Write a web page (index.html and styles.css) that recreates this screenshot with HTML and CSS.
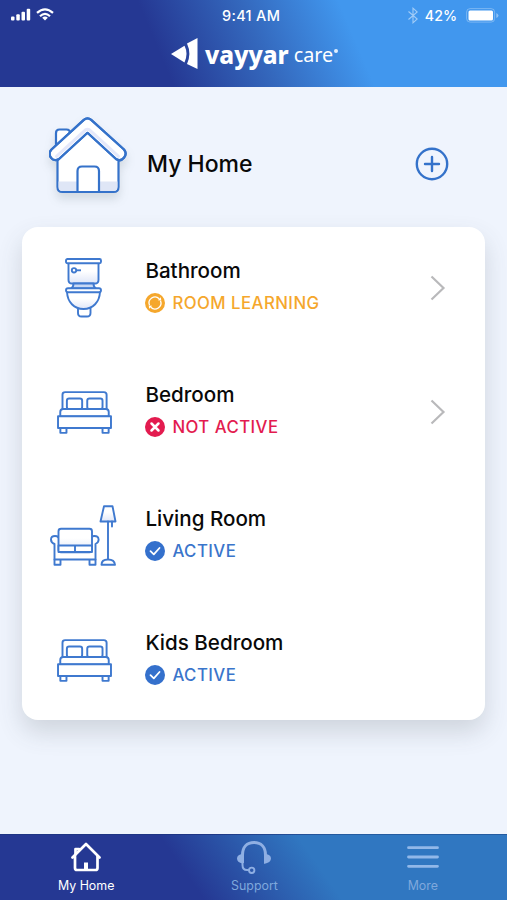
FILE: index.html
```html
<!DOCTYPE html>
<html lang="en">
<head>
  <meta charset="UTF-8" />
  <meta name="viewport" content="width=device-width, initial-scale=1" />
  <title>Vayyar Care - My Home</title>
  <link rel="stylesheet" href="styles.css">
</head>
<body>

<svg class="defs" width="0" height="0">
  <defs>
    <linearGradient id="fade" x1="0" y1="0" x2="0" y2="1">
      <stop offset="0.4" stop-color="#fff" />
      <stop offset="1" stop-color="#dfe6f8" />
    </linearGradient>
    <symbol id="bed" viewBox="0 0 54 42">
      <g fill="#fff" stroke="#3f79cf" stroke-width="1.9" stroke-linejoin="round">
        <path d="M5.4 17.5V3.5Q5.4 1 8 1H46Q48.7 1 48.7 3.5V17.5" />
        <rect x="9.7" y="7.3" width="15" height="10.5" rx="2.2" />
        <rect x="29.7" y="7.3" width="15" height="10.5" rx="2.2" />
        <path d="M3.2 25V20.5Q3.2 17.5 6.2 17.5H47.8Q50.8 17.5 50.8 20.5V25Z" />
        <rect x="3.3" y="35.5" width="6" height="5.5" />
        <rect x="44.7" y="35.5" width="6" height="5.5" />
        <rect x="1" y="24.7" width="52" height="11.5" />
      </g>
    </symbol>
    <symbol id="check" viewBox="0 0 20 20">
      <circle cx="10" cy="10" r="10" fill="#3470cc" />
      <path d="M5.5 10.2L8.8 13.3L14.5 7" fill="none" stroke="#fff" stroke-width="1.8" stroke-linecap="round" stroke-linejoin="round" />
    </symbol>
  </defs>
</svg>

<div class="app">
  <header class="header">
    <div class="status-bar">
      <div class="status-left">
        <svg width="20" height="13" viewBox="0 0 20 13" fill="#fff">
          <rect x="0" y="8.5" width="3.5" height="4" rx="1" />
          <rect x="5.3" y="6.3" width="3.5" height="6.2" rx="1" />
          <rect x="10.5" y="3.7" width="3.5" height="8.8" rx="1" />
          <rect x="15.7" y="0.7" width="3.5" height="11.8" rx="1" />
        </svg>
        <svg width="18" height="13" viewBox="0 0 18 13" fill="none" stroke="#fff" stroke-width="2.2">
          <path d="M1 4.9Q9 -2.3 17 4.9" />
          <path d="M4 8.2Q9 3.7 14 8.2" />
          <path d="M9 12.5L6.2 9.7Q9 7.5 11.8 9.7Z" fill="#fff" stroke="none" />
        </svg>
      </div>
      <span class="time">9:41 AM</span>
      <div class="status-right">
        <svg class="bluetooth" width="10" height="17" viewBox="0 0 10 17">
          <path d="M0.5 4.5L9.2 12L5 15.8V1.2L9.2 5L0.5 12.5" fill="none" stroke="#fff" stroke-width="1.1" />
        </svg>
        <span class="percent">42%</span>
        <svg class="battery" width="33" height="15" viewBox="0 0 33 15">
          <rect x="0.6" y="0.6" width="28" height="13.5" rx="3.5" fill="none" stroke="#fff" stroke-opacity="0.3" />
          <rect x="2.5" y="2.4" width="24.5" height="10" rx="1.5" fill="#fff" />
          <path d="M30.3 5V10Q32.5 9 32.5 7.5T30.3 5Z" fill="#fff" fill-opacity="0.4" />
        </svg>
      </div>
    </div>
    <div class="logo">
      <svg width="27" height="32" viewBox="0 0 27 32" fill="#fff">
        <path d="M0 16L13.5 7.7Q17.5 15.5 13.5 24.5Z" />
        <path d="M16 5.5L26.5 0V31L16 26Q20.7 15.5 16 5.5Z" />
      </svg>
      <span class="brand">vayyar</span>
      <span class="product">care</span>
      <span class="mark"></span>
    </div>
  </header>

  <main class="content">
    <div class="home">
      <svg class="home-icon" width="78" height="78" viewBox="0 0 78 78">
        <g stroke="#3572ca" stroke-width="2.2" stroke-linejoin="round" stroke-linecap="round">
          <path d="M7 32V16Q7 12.500 10.500 12.500H17.500Q21 12.500 21 16V25" fill="#fff" />
          <path d="M8.5 40L38.5 14L69.5 40V70Q69.5 75 64.5 75H13.5Q8.5 75 8.5 70Z" fill="#fff" />
          <path d="M9.6 64.5H68.4V70Q68.4 73.9 64.5 73.9H13.5Q9.6 73.9 9.6 70Z" fill="#dfe6f6" stroke="none" />
          <path d="M28.5 75V54Q28.5 49.5 33 49.5H45.5Q50 49.5 50 54V75Z" fill="#fff" />
          <path d="M34.8 2.9Q38.5 -0.3 42.2 2.9L75 32.5C79.5 38 73 46 67 42L38.5 15.8L10 42C4 46 -2.5 38 2.5 32.5Z" fill="#fff" />
          <path d="M7.500 39.300L36.500 12.800Q38.500 11.500 40.500 12.800L69.500 39.300" fill="none" stroke="#e5e8fa" stroke-width="3" />
          <path d="M34.8 2.9Q38.5 -0.3 42.2 2.9L75 32.5C79.5 38 73 46 67 42L38.5 15.8L10 42C4 46 -2.5 38 2.5 32.5Z" fill="none" />
        </g>
      </svg>
      <h1>My Home</h1>
      <svg class="add" width="34" height="34" viewBox="0 0 34 34" fill="none" stroke="#3472ca" stroke-width="2.4" stroke-linecap="round">
        <circle cx="17" cy="17" r="15.2" />
        <path d="M10 17H24M17 10V24" />
      </svg>
    </div>

    <div class="rooms">
      <div class="room">
        <div class="room-icon">
          <svg width="38" height="60" viewBox="0 0 38 60">
            <g fill="url(#fade)" stroke="#3f79cf" stroke-width="1.9" stroke-linejoin="round">
              <path d="M3.5 5V22Q3.5 25.5 7 25.5H30Q33.5 25.5 33.5 22V5Z" />
              <rect x="1" y="1" width="35" height="4.3" rx="1.5" fill="#fff" />
              <path d="M8.5 25.5Q8.5 29 6 30.5H31Q28.5 29 28.5 25.5Z" fill="#c8d8f4" />
              <path d="M13 50V55Q13 58.5 16.5 58.5H22Q25.5 58.5 25.5 55V50Z" fill="#fff" />
              <path d="M2 34C2.5 44 9 51 18.5 51S34.5 44 35 34Z" />
              <rect x="1" y="30.3" width="35" height="4" rx="2" fill="#fff" />
              <circle cx="9" cy="12.3" r="2.2" fill="#fff" />
              <path d="M11.2 12.3H16" />
            </g>
          </svg>
        </div>
        <div class="room-info">
          <h2>Bathroom</h2>
          <div class="status learning">
            <svg width="20" height="20" viewBox="0 0 20 20">
              <circle cx="10" cy="10" r="10" fill="#f5a72c" />
              <g fill="none" stroke="#fff" stroke-width="1.3">
                <path d="M4.5 12.3A6 6 0 0 1 14.2 5.7" />
                <path d="M15.5 7.7A6 6 0 0 1 5.8 14.3" />
              </g>
              <path d="M12.8 7.3L16.3 7.6L15.7 4.2ZM7.2 12.7L3.7 12.4L4.3 15.8Z" fill="#fff" />
            </svg>
            <span>ROOM LEARNING</span>
          </div>
        </div>
        <svg class="chevron" width="16" height="26" viewBox="0 0 16 26"><path d="M1.5 1.5L13.5 13L1.5 24.5" /></svg>
      </div>

      <div class="room">
        <div class="room-icon"><svg class="bed" width="55" height="43"><use href="#bed" /></svg></div>
        <div class="room-info">
          <h2>Bedroom</h2>
          <div class="status inactive">
            <svg width="20" height="20" viewBox="0 0 20 20">
              <circle cx="10" cy="10" r="10" fill="#e31b4f" />
              <path d="M6.5 6.5L13.5 13.5M13.5 6.5L6.5 13.5" stroke="#fff" stroke-width="2.5" stroke-linecap="round" />
            </svg>
            <span>NOT ACTIVE</span>
          </div>
        </div>
        <svg class="chevron" width="16" height="26" viewBox="0 0 16 26"><path d="M1.5 1.5L13.5 13L1.5 24.5" /></svg>
      </div>

      <div class="room">
        <div class="room-icon">
          <svg width="68" height="62" viewBox="0 0 68 62">
            <g fill="#fff" stroke="#3f79cf" stroke-width="1.9" stroke-linejoin="round" stroke-linecap="round">
              <path d="M54 1.2H62.5L65.5 16.5H50.5Z" fill="url(#fade)" />
              <path d="M58 16.5V54.5M62 16.5V21.5" />
              <path d="M51.5 59.8Q51.5 54.5 58 54.5T65 59.8Z" />
              <path d="M4.5 54.5V59.8H10.5V54.5M39.5 54.5V59.8H45.5V54.5" />
              <path d="M4.5 54.5V39C-0.5 37 0 31 5 31Q9.5 31 9.5 36V47H40V36Q40 31 44.5 31C49.5 31 50 37 45.5 39V54.5Z" />
              <rect x="8.5" y="23.7" width="33.5" height="23.5" rx="2.5" fill="url(#fade)" />
              <path d="M8.5 40.5H42V47H8.5ZM25 40.5V47" />
            </g>
          </svg>
        </div>
        <div class="room-info">
          <h2>Living Room</h2>
          <div class="status active">
            <svg width="20" height="20"><use href="#check" /></svg>
            <span>ACTIVE</span>
          </div>
        </div>
      </div>

      <div class="room">
        <div class="room-icon"><svg class="bed" width="55" height="43"><use href="#bed" /></svg></div>
        <div class="room-info">
          <h2>Kids Bedroom</h2>
          <div class="status active">
            <svg width="20" height="20"><use href="#check" /></svg>
            <span>ACTIVE</span>
          </div>
        </div>
      </div>
    </div>
  </main>

  <nav class="tab-bar">
    <a class="tab selected">
      <svg width="30" height="36" viewBox="0 0 30 36" fill="none" stroke="#fff" stroke-width="2.7" stroke-linejoin="round" stroke-linecap="round">
        <path d="M1.5 19.5L15 6L28.5 19.5" />
        <path d="M4 18.5V30Q4 32 6 32H24.5Q26.5 32 26.5 30V18.5" />
        <path d="M4.5 16.5V11H8V12.5" />
        <path d="M15 24.5V32" stroke-width="4" stroke-linecap="butt" />
      </svg>
      <span>My Home</span>
    </a>
    <a class="tab">
      <svg width="36" height="36" viewBox="0 0 36 36" fill="none" stroke="#8fafe3" stroke-width="3">
        <path d="M6.5 25V17C6.5 9 11 4.5 18 4.5S29.5 9 29.5 17V25" />
        <path d="M6.5 16Q1 16.5 1 20.5T6.5 25.5ZM29.5 16Q35 16.5 35 20.5T28 26Z" fill="#8fafe3" stroke="none" />
        <path d="M6.5 24V27Q6.5 32 11 32H13" stroke-width="2" />
        <circle cx="15.7" cy="32.3" r="2.7" stroke-width="1.9" />
      </svg>
      <span>Support</span>
    </a>
    <a class="tab">
      <svg width="32" height="36" viewBox="0 0 32 36" stroke="#91b8e9" stroke-width="2.8" stroke-linecap="round">
        <path d="M1.5 9.7H30.5M1.5 19H30.5M1.5 28.3H30.5" />
      </svg>
      <span>More</span>
    </a>
  </nav>
</div>

</body>
</html>
```
FILE: styles.css
```css
* {
  box-sizing: border-box;
}

body {
  margin: 0;
  font-family: Inter, "Liberation Sans", sans-serif;
  background-color: #eff4fd;
  color: #090909;
}

svg {
  display: block;
  flex-shrink: 0;
}

.defs {
  position: absolute;
}

.app {
  height: 900px;
  display: flex;
  flex-direction: column;
  overflow: hidden;
}

.header {
  height: 87px;
  background: linear-gradient(67deg, #253893 32%, #3468bd 51%, #4197ee 69%);
  color: #fff;
}

.status-bar {
  height: 30px;
  padding: 0 8px 0 11px;
  display: grid;
  grid-template-columns: 211px 1fr auto;
  align-items: center;
}

.status-left {
  display: flex;
  gap: 5px;
  margin-top: -2px;
}

.time {
  font-size: 14.5px;
  font-weight: 500;
  letter-spacing: 0.3px;
}

.status-right {
  display: flex;
  align-items: center;
}

.bluetooth {
  opacity: 0.5;
  margin-right: 7px;
}

.percent {
  font-size: 14.2px;
  font-weight: 500;
  margin-right: 9px;
}

.logo {
  height: 48px;
  padding-left: 171px;
  display: flex;
  align-items: center;
}

.brand {
  font-family: "Noto Sans", sans-serif;
  font-size: 24.3px;
  font-weight: 800;
  margin-left: 7px;
}

.product {
  font-family: "Noto Sans", sans-serif;
  font-size: 19.8px;
  margin-left: 5px;
}

.mark {
  width: 4px;
  height: 4px;
  margin: -7px 0 0 1px;
  border-radius: 50%;
  background-color: #e1effe;
}

.content {
  flex: 1;
  padding: 0 22px;
}

.home {
  height: 140px;
  padding: 13px 36px 0 27px;
  display: flex;
  align-items: center;
}

.home-icon {
  margin-top: -15px;
  filter: drop-shadow(0 6px 5px rgba(60, 80, 80, 0.16));
}

h1 {
  margin: 0 auto 0 20px;
  font-size: 23px;
  font-weight: 500;
}

.rooms {
  height: 493px;
  border-radius: 16px;
  background-color: #fff;
  box-shadow: 0 12px 24px rgba(70, 80, 85, 0.19);
}

.room {
  height: 124px;
  padding: 0 39px 0 23px;
  display: flex;
  align-items: flex-start;
}

.room-icon {
  width: 78px;
  height: 122px;
  display: flex;
  align-items: center;
  justify-content: center;
}

.room-info {
  flex: 1;
  padding: 30px 0 0 22.4px;
}

h2 {
  margin: 0;
  font-size: 20.6px;
  font-weight: 500;
  line-height: 28px;
}

.status {
  margin-top: 8px;
  height: 20px;
  display: flex;
  align-items: center;
  gap: 7px;
  font-size: 16.8px;
  font-weight: 550;
  letter-spacing: 0.45px;
}

.learning {
  color: #f5a72c;
}

.inactive {
  color: #e31b4f;
}

.active {
  color: #3a75cb;
}

.chevron {
  margin-top: 48px;
  fill: none;
  stroke: #b9b9bb;
  stroke-width: 2.2;
}

.tab-bar {
  height: 66px;
  padding-left: 2px;
  display: grid;
  grid-template-columns: repeat(3, 1fr);
  border-top: 1px solid rgba(20, 50, 110, 0.4);
  background: linear-gradient(55deg, #253893 37%, #2c5cad 51%, #3077c1 62%);
}

.tab {
  display: flex;
  flex-direction: column;
  align-items: center;
  padding-top: 3px;
  font-size: 12.4px;
  line-height: 24px;
  color: #7fa8dc;
}

.selected {
  color: #fff;
}
```
